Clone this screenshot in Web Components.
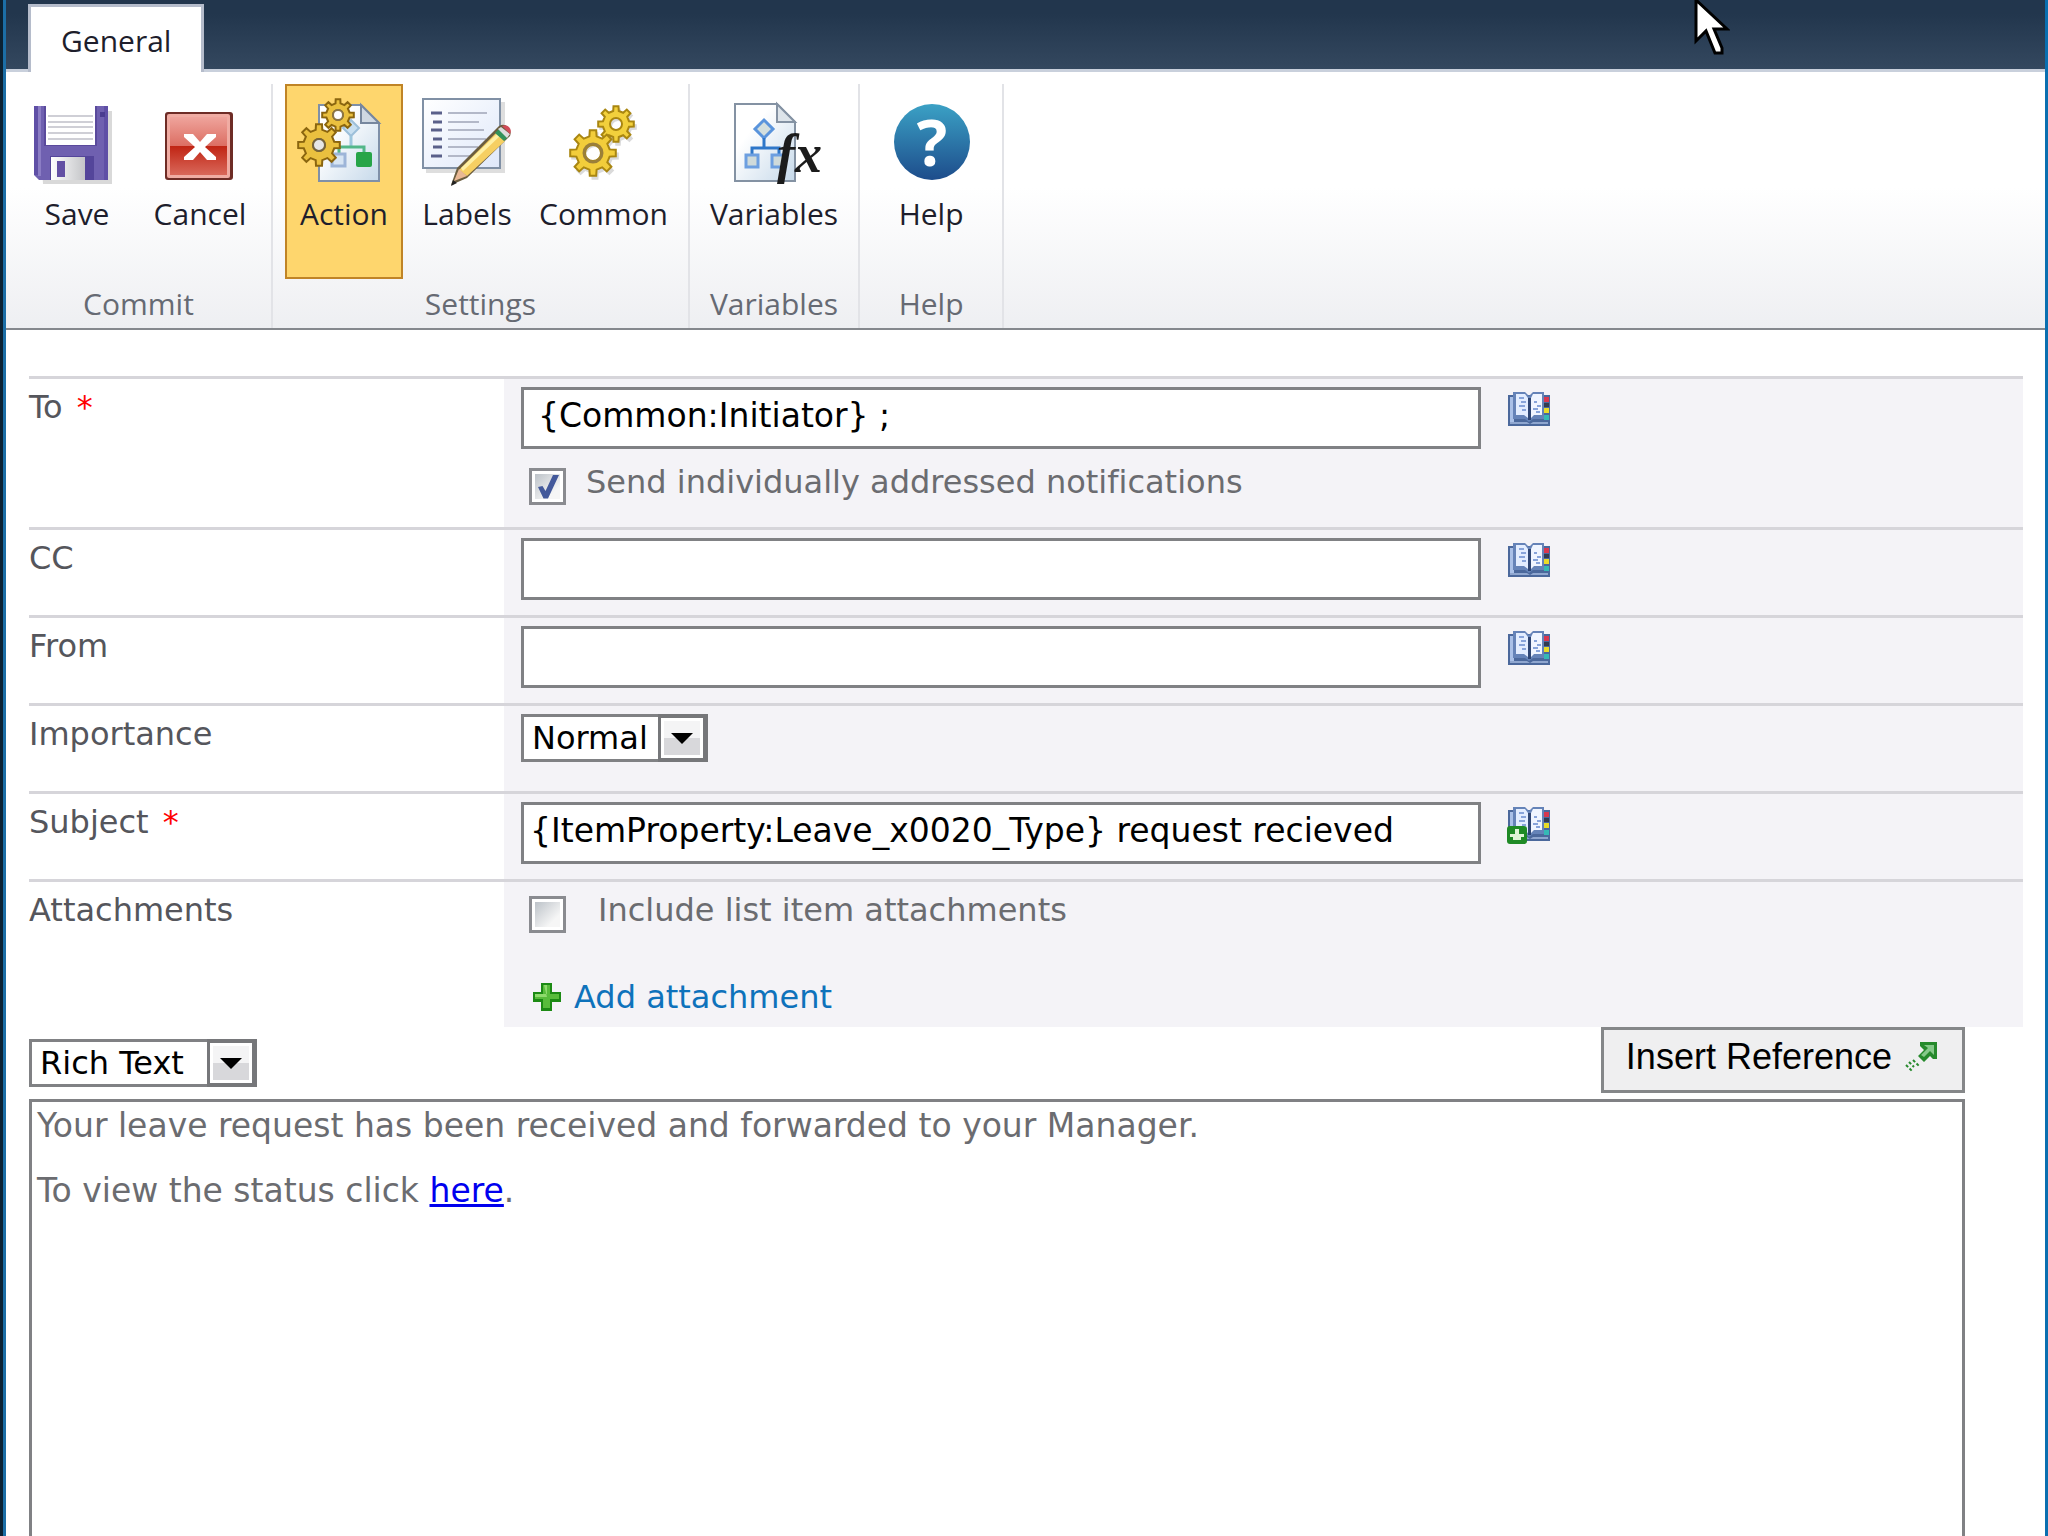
<!DOCTYPE html>
<html lang="en">
<head>
<meta charset="utf-8">
<title>Send notification</title>
<style>
    html, body
    {
        margin: 0;
        height: 100%;
    }
    body
    {
        overflow: hidden;
        background: #fff;
    }
</style>
</head>
<body>
<action-dialog></action-dialog>

<script>
// Outline of a gear with square teeth
function gearPath(cx, cy, radius, hole, teeth = 8)
{
    var points = [];
    var step = 2 * Math.PI / teeth;
    var root = radius * 0.74;
    for(var cnt = 0; cnt < teeth; cnt ++)
    {
        var mid = cnt * step - Math.PI / 2;
        var corners = [[-0.3, root], [-0.2, radius], [0.2, radius], [0.3, root]];
        for(var [offset, dist] of corners)
        {
            var rads = mid + offset * step * 0.9;
            var x = cx + Math.cos(rads) * dist;
            var y = cy + Math.sin(rads) * dist;
            points.push(x.toFixed(1) + " " + y.toFixed(1));
        }
    }
    return "M" + points.join("L") + "Z"
         + `M${cx - hole} ${cy}a${hole} ${hole} 0 1 0 ${hole * 2} 0a${hole} ${hole} 0 1 0 ${-hole * 2} 0Z`;
}

const BOOK = `
    <path d="M1 4h42v31H1z" fill="#4b689c"/>
    <path d="M3 6h4v26H3z" fill="#a9c0e8"/>
    <path d="M3 31h17l3 2 3-2h15v2H3z" fill="#8fa6cf"/>
    <path d="M6 1h12l4 4 4-4h11v27H26l-4 3-4-3H6z" fill="#6583b8"/>
    <path d="M9 3h9l3 4v20l-4-3H9z" fill="#e3edff"/>
    <path d="M26 3h9v21h-8l-3 3V7z" fill="#f0f5ff"/>
    <path d="M21 7h3v22h-3z" fill="#2f4674"/>
    <path d="M12 7h5M14 11h5M12 15h6M15 19h4M27 11h3M30 15h4M26 18h5M29 21h4" stroke="#88a4da" stroke-width="2"/>
    <path d="M37 6h5v5h-5z" fill="#d8374f"/>
    <path d="M37 12h5v4h-5z" fill="#323c50"/>
    <path d="M37 17h5v5h-5z" fill="#e9dc28"/>
    <path d="M37 24h5v5h-5z" fill="#35b9b5"/>`;

const ICONS =
{
    save: [96, 96, `
        <path d="M10 17h73v73H14z" fill="#000" opacity=".15"/>
        <path d="M5 12h74v74H10l-5-5z" fill="#6f60b0"/>
        <path d="M5 12h4v69H5zM75 12h4v74h-4z" fill="#5f4fa6"/>
        <path d="M9 12h3v70H9z" fill="#8b7dc4"/>
        <path d="M15 12h53v40H15z" fill="#5a4a9c"/>
        <path d="M17 12h49v39H17z" fill="#fff"/>
        <path d="M19 22h45M19 28h45M19 33h45M19 39h45M19 45h45" stroke="#cfcfd6" stroke-width="2"/>
        <path d="M71 18h5v5h-5z" fill="#4a3c90"/>
        <path d="M21 62h44v24H21z" fill="#54459a"/>
        <path d="M22 63h34v23H22z" fill="url(#metal)"/>
        <path d="M28 67h8v16h-8z" fill="#6350a4"/>
        <defs><linearGradient id="metal"><stop stop-color="#fff"/><stop offset="1" stop-color="#c4c5c8"/></linearGradient></defs>`],
    cancel: [96, 96, `
        <defs>
          <linearGradient id="red" x2="0" y2="1">
            <stop stop-color="#efa49c"/><stop offset=".5" stop-color="#dc6e63"/>
            <stop offset=".5" stop-color="#c02413"/><stop offset="1" stop-color="#d9685a"/>
          </linearGradient>
        </defs>
        <rect x="13" y="18" width="68" height="68" rx="3" fill="#6e2c26"/>
        <rect x="15" y="20" width="63" height="64" rx="2" fill="#f0aca3"/>
        <rect x="18" y="23" width="57" height="58" fill="url(#red)"/>
        <path d="M32 40h9l7 8 7-8h9v3L53 53l11 10v3h-9l-7-8-7 8h-9v-3l11-10-11-10z" fill="#fff"/>`],
    action: [96, 96, `
        <defs><linearGradient id="paper" x2="1" y2="1"><stop offset=".3" stop-color="#fff"/><stop offset="1" stop-color="#c6d9ea"/></linearGradient></defs>
        <path d="M23 11h42l18 18v58H23z" fill="url(#paper)" stroke="#7f90a8" stroke-width="2"/>
        <path d="M65 11v18h18z" fill="#cfd8e2" stroke="#77879e" stroke-width="2"/>
        <path d="M55 26l8 8-8 8-8-8z" fill="#c8dff0" stroke="#9dbfd9" stroke-width="2"/>
        <path d="M55 42v11" stroke="#9dc6dd" stroke-width="3"/>
        <path d="M43 63V53h25v8" fill="none" stroke="#53b789" stroke-width="3"/>
        <path d="M36 60h13v12H36z" fill="#d7e5f3" stroke="#9db5d8" stroke-width="3"/>
        <rect x="60" y="58" width="16" height="15" rx="2" fill="#27a548"/>
        <path d="${gearPath(42, 21, 16, 5)}" fill="#eac03f" stroke="#8a650f" stroke-width="2" fill-rule="evenodd"/>
        <path d="M37 21a5 5 0 1 0 10 0a5 5 0 1 0-10 0" fill="#fff" stroke="#8b7648" stroke-width="2"/>
        <path d="${gearPath(23, 51, 21, 6)}" fill="#eac03f" stroke="#8a650f" stroke-width="2" fill-rule="evenodd"/>
        <path d="M17 51a6 6 0 1 0 12 0a6 6 0 1 0-12 0" fill="#e6e6e6" stroke="#74643f" stroke-width="2"/>`],
    labels: [96, 96, `
        <defs><linearGradient id="sheet" x2="1" y2="1"><stop stop-color="#fff"/><stop offset="1" stop-color="#dfe8fa"/></linearGradient></defs>
        <path d="M7 8h79v71H7z" opacity=".13"/>
        <path d="M4 5h77v69H4z" fill="url(#sheet)" stroke="#8090a5" stroke-width="2"/>
        <path d="M12 19h11M14 28h9M12 36h11M14 45h9M14 53h9M12 62h11" stroke="#5a608a" stroke-width="3"/>
        <path d="M29 19h39M29 28h31M29 36h36M29 45h38M29 53h30M29 62h22" stroke="#b3b8c8" stroke-width="2"/>
        <path d="M32 91l6-17 42-42q5-3 9 1t2 9L48 84z" fill="#6b5d3f"/>
        <path d="M40 76l37-37 9 8-38 35z" fill="#f6cf62"/>
        <path d="M42 74l36-34 3 2-37 35z" fill="#fff0a4"/>
        <path d="M35 87l5-12 8 7z" fill="#e9b894"/>
        <path d="M32 92l2-6 4 3z" fill="#222"/>
        <path d="M76 39l4-4 9 8-4 4z" fill="#33925b"/>
        <path d="M79 35l3-2 9 7-3 4z" fill="#ddd"/>
        <path d="M83 32q4-2 7 1t1 7z" fill="#d14b58"/>`],
    common: [96, 96, `
        <g transform="translate(2 3)" opacity=".14"><path d="${gearPath(61, 30, 19, 6)}"/><path d="${gearPath(38, 59, 24, 9)}"/></g>
        <path d="${gearPath(61, 30, 18, 6)}" fill="#f2d03c" stroke="#a98611" stroke-width="2" fill-rule="evenodd"/>
        <path d="${gearPath(38, 59, 23, 8)}" fill="#f2cd3b" stroke="#a98611" stroke-width="2" fill-rule="evenodd"/>
        <circle cx="38" cy="59" r="9" fill="none" stroke="#9a7f3a" stroke-width="3"/>`],
    variables: [96, 96, `
        <defs><linearGradient id="page" x2="1" y2="1"><stop offset=".3" stop-color="#fff"/><stop offset="1" stop-color="#c6d9ea"/></linearGradient></defs>
        <path d="M9 10h42l18 18v59H9z" fill="url(#page)" stroke="#8492a3" stroke-width="2"/>
        <path d="M51 10v18h18z" fill="#dde4ea" stroke="#8492a3" stroke-width="2"/>
        <path d="M38 26l9 9-9 9-9-9z" fill="#d3dfde" stroke="#5a94dc" stroke-width="3"/>
        <path d="M38 44v10M26 60v-6h27v6" fill="none" stroke="#2e77c9" stroke-width="3"/>
        <path d="M20 61h12v12H20zM46 61h12v12H46z" fill="#cfdada" stroke="#6d9fe0" stroke-width="3"/>
        <text x="51" y="78" font-family="Liberation Serif, serif" font-size="54" font-style="italic" font-weight="bold" fill="#1b1b1b">fx</text>`],
    help: [96, 96, `
        <defs><linearGradient id="ball" x2="0" y2="1"><stop stop-color="#3ba1c5"/><stop offset="1" stop-color="#1d4c8b"/></linearGradient></defs>
        <circle cx="49" cy="48" r="38" fill="url(#ball)"/>
        <text x="49" y="72" text-anchor="middle" font-family="Open Sans, sans-serif" font-size="64" font-weight="bold" fill="#fff">?</text>`],
    book: [44, 38, BOOK],
    bookAdd: [44, 38, BOOK + `
        <rect x="0" y="20" width="20" height="18" rx="3" fill="#1f8a26"/>
        <path d="M8 23h4v5h5v3h-3v3H6v-3H3v-3h5z" fill="#dff5d6"/>`],
    plus: [30, 30, `
        <path d="M9 1h11v9h9v10h-9v9H9v-9H1V10h8z" fill="#1c8a14"/>
        <path d="M11 3h7v9h9v5h-9v9h-7v-9H3v-5h8z" fill="#58bc3b"/>
        <path d="M12 3h3v9H3v3h12z" fill="#8fdb6d"/>`],
    insert: [34, 32, `
        <path d="M16 1h17v17h-4l-3-3-6 6-6-6 6-6-4-4z" fill="#268a2c"/>
        <path d="M20 4h10v10l-4-4-6 6-3-2 7-7z" fill="#86c98a"/>
        <path d="M9 19l7 7M5 21l5 5M2 24l6 6" stroke="#268a2c" stroke-width="2" stroke-dasharray="3 2"/>`],
    pointer: [36, 56, `
        <path d="M2 0v41l10-10 9 22h7v-5l-8-19h13z" fill="#fff" stroke="#000" stroke-width="3"/>`]
};

class BaseElement extends HTMLElement
{
    constructor()
    {
        super();
        this.attachShadow({ mode: "open" });
    }

    connectedCallback()
    {
        this.shadowRoot.innerHTML = "<style>" + this.css() + "</style>" + this.template();
    }
}

class AppIcon extends BaseElement
{
    template()
    {
        var [w, h, shapes] = ICONS[this.getAttribute("name")];
        return `<svg width="${w}" height="${h}" viewBox="0 0 ${w} ${h}" aria-hidden="true">${shapes}</svg>`;
    }
    css()
    {
        return `
        :host { display: inline-flex; flex: none; }
        svg { display: block; }
        `;
    }
}

class RibbonButton extends BaseElement
{
    template()
    {
        return `
        <button type="button">
          <app-icon name="${this.getAttribute("icon")}"></app-icon>
          <span><slot></slot></span>
        </button>`;
    }
    css()
    {
        return `
        :host { display: flex; }
        button
        {
            display: flex;
            flex-direction: column;
            align-items: center;
            gap: 4px;
            min-width: 118px;
            padding: 8px 6px;
            border: 2px solid transparent;
            background: none;
            font: inherit;
            color: #1e1e2c;
        }
        span { line-height: 40px; }
        :host([selected]) button
        {
            border-color: #c08426;
            background: #fed66d;
        }
        `;
    }
}

class RibbonGroup extends BaseElement
{
    template()
    {
        return `
        <div class="buttons"><slot></slot></div>
        <div class="title">${this.getAttribute("title-text")}</div>`;
    }
    css()
    {
        return `
        :host
        {
            display: flex;
            flex-direction: column;
            border-right: 2px solid #e2e3e7;
            padding: 0 12px;
        }
        .buttons { display: flex; gap: 5px; height: 195px; }
        .title
        {
            line-height: 49px;
            text-align: center;
            color: #666a73;
        }
        `;
    }
}

class RibbonBar extends BaseElement
{
    template()
    {
        return `
        <nav><button type="button">General</button></nav>
        <div class="groups"><slot></slot></div>`;
    }
    css()
    {
        return `
        :host
        {
            display: block;
            font: 30px/40px "Open Sans", "Noto Sans", sans-serif;
        }
        nav
        {
            display: flex;
            align-items: flex-end;
            height: 69px;
            padding-left: 22px;
            border-bottom: 3px solid #c9d0dc;
            background: linear-gradient(#22364d 20%, #34485f);
        }
        nav button
        {
            height: 68px;
            margin-bottom: -3px;
            padding: 2px 30px 0;
            border: 3px solid #b5bccb;
            border-bottom: 0;
            background: #fff;
            font: inherit;
            color: #1e1e2c;
        }
        .groups
        {
            display: flex;
            padding-top: 12px;
            border-bottom: 2px solid #85888d;
            background: linear-gradient(#fff 45%, #eeeff2);
        }
        `;
    }
}

class FormRow extends BaseElement
{
    template()
    {
        return `
        <div class="label"><slot name="label"></slot></div>
        <div class="control"><slot></slot></div>`;
    }
    css()
    {
        return `
        :host
        {
            display: flex;
            border-top: 3px solid #d6d5da;
        }
        .label
        {
            flex: none;
            width: 475px;
            padding-top: 8px;
            color: #55565c;
        }
        .control
        {
            flex: 1;
            padding: 8px 17px;
            background: #f4f3f7;
        }
        `;
    }
}

class NotificationForm extends BaseElement
{
    lookupButton(icon, title)
    {
        return `<button type="button" class="lookup" aria-label="${title}"><app-icon name="${icon}"></app-icon></button>`;
    }

    template()
    {
        return `
        <form-row>
          <label slot="label" for="to">To <b>*</b></label>
          <div class="line">
            <input type="text" id="to" class="people" value="{Common:Initiator} ;">
            ${this.lookupButton("book", "Look up To")}
          </div>
          <div class="check first">
            <input type="checkbox" id="individual" checked>
            <label for="individual">Send individually addressed notifications</label>
          </div>
        </form-row>
        <form-row>
          <label slot="label" for="cc">CC</label>
          <div class="line"><input type="text" id="cc">${this.lookupButton("book", "Look up CC")}</div>
        </form-row>
        <form-row>
          <label slot="label" for="from">From</label>
          <div class="line"><input type="text" id="from">${this.lookupButton("book", "Look up From")}</div>
        </form-row>
        <form-row>
          <label slot="label" for="importance">Importance</label>
          <div class="line">
            <span class="drop importance">
              <select id="importance"><option>Normal</option></select><i></i>
            </span>
          </div>
        </form-row>
        <form-row>
          <label slot="label" for="subject">Subject <b>*</b></label>
          <div class="line">
            <input type="text" id="subject" value="{ItemProperty:Leave_x0020_Type} request recieved">
            ${this.lookupButton("bookAdd", "Insert reference in subject")}
          </div>
        </form-row>
        <form-row>
          <label slot="label" for="include">Attachments</label>
          <div class="check second">
            <input type="checkbox" id="include">
            <label for="include">Include list item attachments</label>
          </div>
          <a class="add" href="#"><app-icon name="plus"></app-icon>Add attachment</a>
        </form-row>
        <div class="tools">
          <span class="drop format">
            <select aria-label="Format"><option>Rich Text</option></select><i></i>
          </span>
          <button type="button" class="insert">Insert Reference <app-icon name="insert"></app-icon></button>
        </div>
        <div class="editor" contenteditable="true" role="textbox" aria-label="Message">
          <p>Your leave request has been received and forwarded to your Manager.</p>
          <p>To view the status click <a href="#">here</a>.</p>
        </div>`;
    }
    css()
    {
        return `
        :host
        {
            display: flex;
            flex-direction: column;
            padding: 46px 22px 0 23px;
            font: 32px/40px "DejaVu Sans", sans-serif;
            font-variant-ligatures: none;
            color: #6b6c70;
        }
        b { margin-left: 4px; font-weight: normal; color: #f00; }
        .line
        {
            display: flex;
            align-items: flex-start;
            gap: 26px;
            min-height: 69px;
        }
        input[type=text]
        {
            box-sizing: border-box;
            width: 960px;
            height: 62px;
            padding: 0 6px 6px;
            border: 3px solid #808184;
            background: #fff;
            font: inherit;
            font-size: 33px;
            color: #000;
        }
        input.people { padding-left: 14px; }
        .lookup
        {
            margin-top: 4px;
            padding: 0;
            border: 0;
            background: none;
        }
        .check { display: flex; align-items: flex-start; padding-left: 8px; }
        .check.first { gap: 20px; height: 57px; padding-top: 6px; }
        .check.second { gap: 32px; height: 87px; }
        input[type=checkbox]
        {
            appearance: none;
            box-sizing: border-box;
            width: 37px;
            height: 37px;
            margin: 6px 0 0;
            padding: 3px;
            border: 3px solid #8a8b90;
            background: linear-gradient(135deg, #bcc2c8, #f6f6f6 75%) content-box, #fff;
        }
        input[type=checkbox]:checked::after
        {
            content: "";
            display: block;
            height: 25px;
            background: #43599b;
            clip-path: polygon(12% 52%, 30% 48%, 42% 68%, 72% 4%, 96% 4%, 52% 98%, 34% 98%);
        }
        .drop { display: inline-grid; }
        .drop select, .drop i { grid-area: 1 / 1; }
        select
        {
            appearance: none;
            box-sizing: border-box;
            height: 48px;
            padding: 0 0 0 8px;
            border: 3px solid #808184;
            border-radius: 0;
            background: #fff;
            font: inherit;
            font-size: 32px;
            color: #000;
        }
        .drop i
        {
            justify-self: end;
            box-sizing: border-box;
            width: 50px;
            height: 48px;
            border: 4px solid #76777a;
            border-width: 4px 5px 4px 3px;
            background: linear-gradient(#f4f4f5 50%, #d8d8db 50%);
            box-shadow: inset 0 0 0 3px #fff;
            pointer-events: none;
        }
        .drop i::before
        {
            content: "";
            display: block;
            width: 22px;
            height: 11px;
            margin: 15px auto 0;
            background: #000;
            clip-path: polygon(0 0, 100% 0, 50% 100%);
        }
        .importance { width: 187px; }
        .format { width: 228px; }
        .add
        {
            display: inline-flex;
            align-items: center;
            gap: 12px;
            padding-left: 11px;
            color: #0e72bb;
            text-decoration: none;
        }
        form-row:nth-of-type(6) { height: 145px; }
        .tools
        {
            display: flex;
            align-items: center;
            justify-content: space-between;
            height: 72px;
            padding-right: 58px;
        }
        .insert
        {
            display: flex;
            align-items: center;
            gap: 12px;
            box-sizing: border-box;
            height: 66px;
            margin-bottom: 6px;
            padding: 0 24px 6px 22px;
            border: 3px solid #858789;
            background: #efeff0;
            font: 36px/44px "Liberation Sans", sans-serif;
            color: #000;
        }
        .editor
        {
            flex: 1;
            margin-right: 58px;
            padding: 4px 5px;
            border: 3px solid #808184;
            border-bottom: 0;
            font-size: 33px;
        }
        p { margin: 0 0 25px; }
        p a { color: #00e; }
        `;
    }
}

class ActionDialog extends BaseElement
{
    template()
    {
        return `
        <ribbon-bar>
          <ribbon-group title-text="Commit">
            <ribbon-button icon="save">Save</ribbon-button>
            <ribbon-button icon="cancel">Cancel</ribbon-button>
          </ribbon-group>
          <ribbon-group title-text="Settings">
            <ribbon-button icon="action" selected>Action</ribbon-button>
            <ribbon-button icon="labels">Labels</ribbon-button>
            <ribbon-button icon="common">Common</ribbon-button>
          </ribbon-group>
          <ribbon-group title-text="Variables">
            <ribbon-button icon="variables">Variables</ribbon-button>
          </ribbon-group>
          <ribbon-group title-text="Help">
            <ribbon-button icon="help">Help</ribbon-button>
          </ribbon-group>
        </ribbon-bar>
        <notification-form></notification-form>
        <app-icon class="pointer" name="pointer"></app-icon>`;
    }
    css()
    {
        return `
        :host
        {
            display: flex;
            flex-direction: column;
            box-sizing: border-box;
            height: 100vh;
            border-left: 3px solid #0c2233;
            border-right: 3px solid #0a6fb0;
            box-shadow: inset 3px 0 #1c6ea6;
            padding-left: 3px;
        }
        notification-form { flex: 1; }
        .pointer
        {
            position: absolute;
            top: 0;
            left: 1694px;
        }
        `;
    }
}

customElements.define("app-icon", AppIcon);
customElements.define("ribbon-button", RibbonButton);
customElements.define("ribbon-group", RibbonGroup);
customElements.define("ribbon-bar", RibbonBar);
customElements.define("form-row", FormRow);
customElements.define("notification-form", NotificationForm);
customElements.define("action-dialog", ActionDialog);
</script>
</body>
</html>
